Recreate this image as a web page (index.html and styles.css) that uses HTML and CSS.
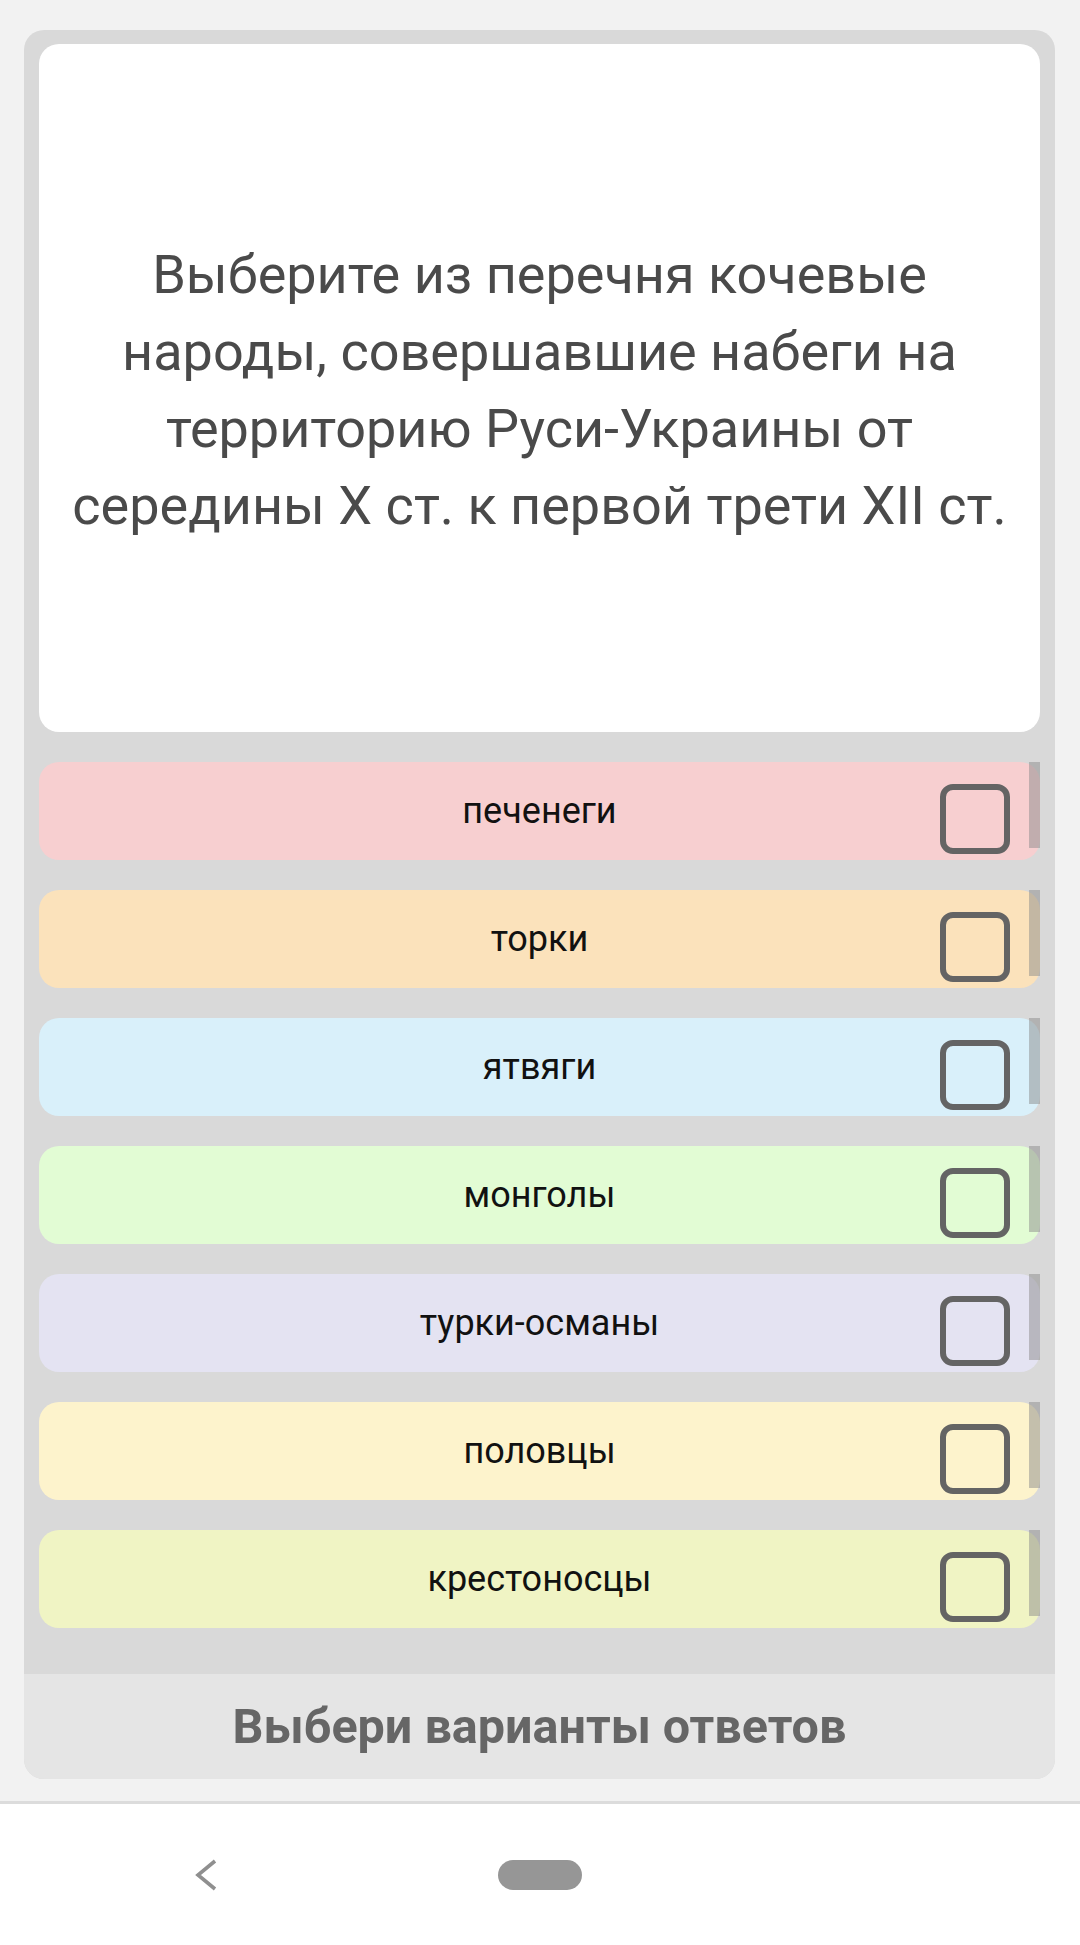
FILE: index.html
```html
<!DOCTYPE html>
<html lang="ru">
<head>
    <meta charset="UTF-8">
    <meta name="viewport" content="width=device-width, initial-scale=1.0">
    <title>Тест</title>
    <link rel="stylesheet" href="styles.css">
</head>
<body>
    <div class="page">
        <div class="panel">
            <div class="panel-body">
                <div class="question">
                    <p>Выберите из перечня кочевые<br>народы, совершавшие набеги на<br>территорию Руси-Украины от<br>середины X ст. к первой трети XII ст.</p>
                </div>
                <div class="options">
                    <div class="option pink"><span class="label">печенеги</span><span class="check"></span></div>
                    <div class="option orange"><span class="label">торки</span><span class="check"></span></div>
                    <div class="option blue"><span class="label">ятвяги</span><span class="check"></span></div>
                    <div class="option green"><span class="label">монголы</span><span class="check"></span></div>
                    <div class="option lavender"><span class="label">турки-османы</span><span class="check"></span></div>
                    <div class="option yellow"><span class="label">половцы</span><span class="check"></span></div>
                    <div class="option lime"><span class="label">крестоносцы</span><span class="check"></span></div>
                </div>
            </div>
            <div class="footer">Выбери варианты ответов</div>
        </div>
    </div>
    <div class="navbar">
        <svg class="back" width="26" height="32" viewBox="0 0 26 32">
            <polyline points="22,2 5,16 22,30" fill="none" stroke="#8f8f8f" stroke-width="3.6"/>
        </svg>
        <div class="home"></div>
    </div>
</body>
</html>
```

FILE: styles.css
```css
body {
    margin: 0;
    background-color: #f2f2f2;
    font-family: Roboto, "Noto Sans", sans-serif;
}
.page {
    height: 1771px;
    padding: 30px 25px 0 24px;
}
.panel {
    background-color: #d9d9d9;
    border-radius: 20px;
    overflow: hidden;
}
.panel-body {
    padding: 14px 15px 46px 15px;
}
.question {
    height: 688px;
    background-color: #fff;
    border-radius: 20px;
    display: flex;
    align-items: center;
    justify-content: center;
    text-align: center;
}
.question p {
    margin: 0;
    padding-top: 4px;
    font-size: 54px;
    line-height: 77px;
    color: #4a4a4a;
}
.options {
    display: flex;
    flex-direction: column;
    gap: 30px;
    margin-top: 30px;
}
.option {
    position: relative;
    height: 98px;
    border-radius: 20px;
    display: grid;
    grid-template-columns: 1fr auto 1fr;
    align-items: center;
}
.option::after {
    content: "";
    position: absolute;
    top: 0;
    right: 0;
    width: 11px;
    height: 86px;
    background-color: rgba(140, 140, 140, 0.5);
}
.label {
    grid-column: 2;
    font-size: 36px;
    color: #111;
}
.check {
    grid-column: 3;
    justify-self: end;
    align-self: start;
    box-sizing: border-box;
    width: 70px;
    height: 70px;
    margin: 22px 30px 0 0;
    border: 6px solid #646464;
    border-radius: 13px;
}
.pink { background-color: #f7cfd0; }
.orange { background-color: #fbe2bb; }
.blue { background-color: #d9f0fa; }
.green { background-color: #e2fcd4; }
.lavender { background-color: #e4e3f2; }
.yellow { background-color: #fdf3cc; }
.lime { background-color: #f0f4c4; }
.footer {
    height: 105px;
    background-color: #e5e5e5;
    display: flex;
    align-items: center;
    justify-content: center;
    font-size: 48.5px;
    font-weight: bold;
    color: #666;
}
.navbar {
    height: 141px;
    background-color: #fff;
    border-top: 3px solid #dcdcdc;
    display: flex;
    align-items: center;
}
.back {
    margin-left: 193px;
}
.home {
    width: 84px;
    height: 30px;
    margin-left: 279px;
    border-radius: 15px;
    background-color: #969696;
}
```
